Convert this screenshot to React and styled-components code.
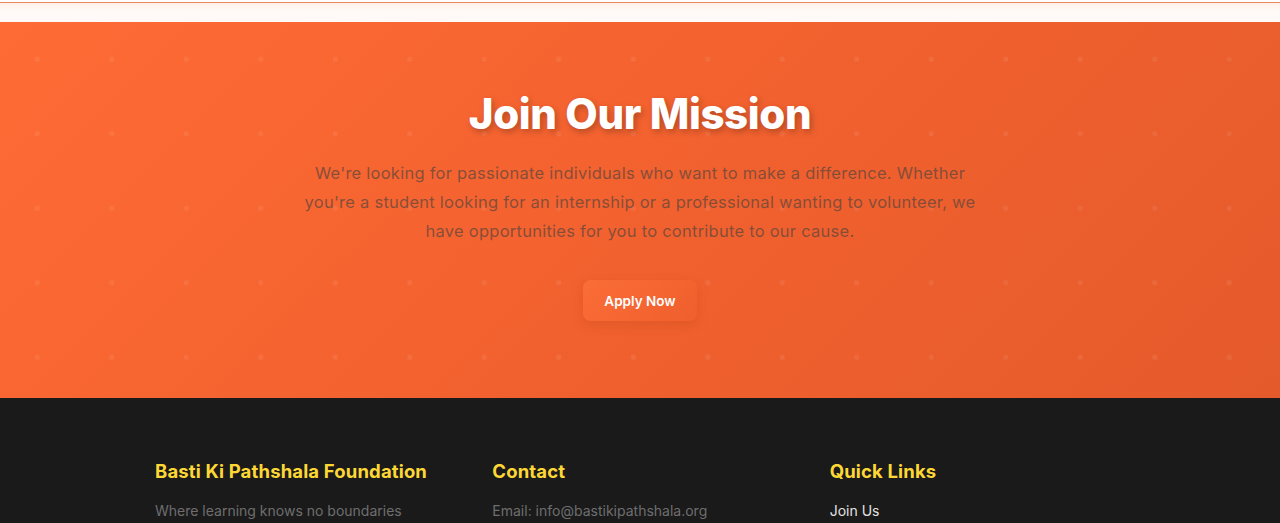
import styled, { createGlobalStyle } from "styled-components";

const GlobalStyle = createGlobalStyle`
  * { box-sizing: border-box; }
  body {
    margin: 0;
    font-family: "Inter", "Noto Sans", sans-serif;
    background: #1a1a1a;
  }
`;

const TopStrip = styled.div`
  height: 22px;
  padding-top: 2px;
  background: #ffffff;

  &::after {
    content: "";
    display: block;
    height: 19px;
    border-top: 1px solid #ee8a60;
    border-bottom: 1px solid #f7d9cc;
    background: linear-gradient(180deg, #fff1e9 0%, #fffaf7 40%, #fffaf7 100%);
  }
`;

const Mission = styled.section`
  padding: 68px 20px 77px;
  text-align: center;
  background:
    radial-gradient(circle at center, rgba(255, 255, 255, 0.07) 0 2.5px, transparent 3px) 0 0 / 74.5px 74.5px,
    linear-gradient(135deg, #ff6b35 0%, #f3622f 45%, #e55a2b 100%);
`;

const Title = styled.h2`
  margin: 0 0 21px;
  font-size: 42px;
  line-height: 48px;
  font-weight: 800;
  letter-spacing: -0.4px;
  color: #ffffff;
  text-shadow: 2px 3px 6px rgba(0, 0, 0, 0.25);
`;

const Lead = styled.p`
  max-width: 720px;
  margin: 0 auto;
  font-size: 16.5px;
  line-height: 29px;
  letter-spacing: 0.25px;
  color: rgba(90, 70, 60, 0.72);
`;

const ApplyButton = styled.a`
  display: inline-flex;
  align-items: center;
  justify-content: center;
  margin-top: 34px;
  width: 114px;
  height: 41px;
  border-radius: 8px;
  font-size: 13.5px;
  font-weight: 600;
  color: #ffffff;
  text-decoration: none;
  background: linear-gradient(135deg, #fb6d37 0%, #ee5f2d 100%);
  box-shadow: 0 4px 12px rgba(160, 50, 10, 0.18);
`;

const Footer = styled.footer`
  background: #1a1a1a;
  padding: 62px 0 0;
  height: 125px;
  overflow: hidden;
`;

const FooterGrid = styled.div`
  max-width: 970px;
  margin: 0 auto;
  display: grid;
  grid-template-columns: repeat(3, 1fr);
  gap: 42px;
`;

const FooterHeading = styled.h3`
  margin: 0 0 19px;
  font-size: 18.5px;
  line-height: 22px;
  font-weight: 700;
  letter-spacing: 0.15px;
  color: #fdd835;
`;

const FooterText = styled.p`
  margin: 0;
  font-size: 14px;
  line-height: 20px;
  color: ${(p) => (p.$light ? "#e2e2e2" : "#6e6e6e")};
`;

const columns = [
  { title: "Basti Ki Pathshala Foundation", text: "Where learning knows no boundaries" },
  { title: "Contact", text: "Email: info@bastikipathshala.org" },
  { title: "Quick Links", text: "Join Us", light: true },
];

const App = () => {
  return (
    <>
      <GlobalStyle />
      <TopStrip />
      <Mission>
        <Title>Join Our Mission</Title>
        <Lead>
          We're looking for passionate individuals who want to make a difference. Whether
          <br />
          you're a student looking for an internship or a professional wanting to volunteer, we
          <br />
          have opportunities for you to contribute to our cause.
        </Lead>
        <ApplyButton href="#">Apply Now</ApplyButton>
      </Mission>
      <Footer>
        <FooterGrid>
          {columns.map(({ title, text, light }) => (
            <div key={title}>
              <FooterHeading>{title}</FooterHeading>
              <FooterText $light={light}>{text}</FooterText>
            </div>
          ))}
        </FooterGrid>
      </Footer>
    </>
  );
};

export default App;
